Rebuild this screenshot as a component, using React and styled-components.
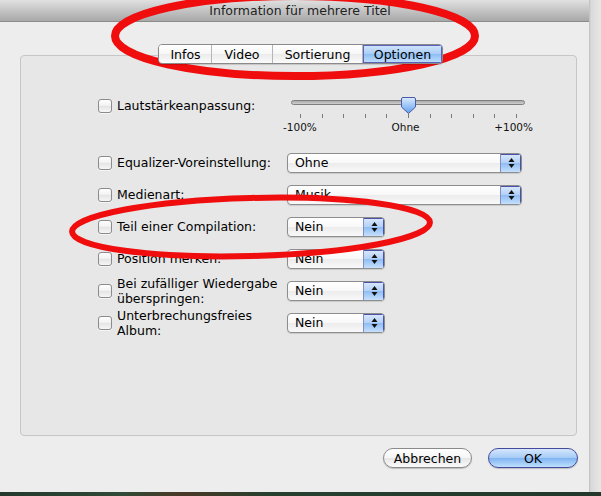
import React from "react";
import styled, { createGlobalStyle } from "styled-components";

const GlobalStyle = createGlobalStyle`
  html, body {
    margin: 0;
    padding: 0;
    background: #e4e4e4;
  }
  body {
    font-family: "DejaVu Sans", "Liberation Sans", sans-serif;
    font-size: 12.5px;
    color: #000;
  }
`;

const Screen = styled.div`
  position: relative;
  width: 601px;
  height: 496px;
  display: flex;
  flex-direction: column;
  overflow: hidden;
`;

const Desk = styled.div`
  display: flex;
  height: 492px;
`;

const Window = styled.div`
  width: 589px;
  height: 492px;
  background: #ededed;
  display: flex;
  flex-direction: column;
`;

const RightEdge = styled.div`
  flex: 1;
  background: linear-gradient(90deg, #bdbdbd 0, #dadada 2px, #e6e6e6 100%);
`;

const BottomStrip = styled.div`
  height: 4px;
  background: linear-gradient(90deg, #24392c 0, #2f4a36 20%, #4a3826 30%, #27402e 45%, #23382b 100%);
`;

const TitleBar = styled.div`
  height: 21px;
  border-bottom: 1px solid #8c8c8c;
  background: linear-gradient(#e0e0e0, #c4c4c4 50%, #a8a8a8);
  display: flex;
  align-items: center;
  justify-content: center;
  padding-left: 11px;
  color: #222;
  font-size: 12.5px;
`;

const TabBar = styled.div`
  position: relative;
  z-index: 1;
  margin: 22px 0 0 158px;
  display: flex;
  align-self: flex-start;
  height: 18px;
  border: 1px solid #8a8a8a;
  border-radius: 4px;
  overflow: hidden;
  box-shadow: 0 1px 1px rgba(0, 0, 0, 0.15);
`;

const Tab = styled.div`
  width: ${(p) => p.$w}px;
  display: flex;
  align-items: center;
  justify-content: center;
  border-left: 1px solid ${(p) => (p.$first ? "transparent" : "#b5b5b5")};
  background: ${(p) =>
    p.$active
      ? "linear-gradient(#d3e5fb, #a9cdf6 50%, #8dbdf4 51%, #c2e0fd)"
      : "linear-gradient(#ffffff, #f6f6f6 50%, #ebebeb 51%, #fbfbfb)"};
  box-shadow: ${(p) => (p.$active ? "inset 0 0 0 1px #5b63b8" : "none")};
`;

const Panel = styled.div`
  margin: -9px 0 0 20px;
  width: 557px;
  height: 381px;
  box-sizing: border-box;
  border: 1px solid #c6c6c6;
  border-radius: 4px;
  background: #e7e7e7;
  padding: 41px 0 0 77px;
  display: flex;
  flex-direction: column;
  gap: 11px;
`;

const Row = styled.div`
  display: grid;
  grid-template-columns: 14px 165px auto;
  grid-template-rows: ${(p) => (p.$slider ? "auto" : "21px")};
  column-gap: 5px;
  align-items: ${(p) => (p.$slider ? "start" : "center")};
  margin-bottom: ${(p) => (p.$slider ? "8px" : "0")};
`;

const Check = styled.div`
  width: 14px;
  height: 14px;
  box-sizing: border-box;
  border: 1px solid #8b8b8b;
  border-radius: 3px;
  background: linear-gradient(#ffffff, #f1f1f1 50%, #e4e4e4 51%, #f7f7f7);
  box-shadow: 0 1px 0 rgba(255, 255, 255, 0.6);
  margin-top: ${(p) => (p.$slider ? "2px" : "0")};
`;

const Label = styled.div`
  line-height: 15px;
  white-space: nowrap;
  margin-top: ${(p) => (p.$slider ? "1px" : "0")};
`;

const Slider = styled.div`
  width: 238px;
  display: flex;
  flex-direction: column;
`;

const TrackArea = styled.div`
  position: relative;
  height: 16px;
  padding: 3px 0 0 4px;
  box-sizing: border-box;
`;

const Track = styled.div`
  width: 234px;
  height: 5px;
  box-sizing: border-box;
  border: 1px solid #7e7e7e;
  border-radius: 3px;
  background: linear-gradient(#a9a9a9, #cfcfcf);
`;

const Thumb = styled.svg`
  position: absolute;
  left: 114px;
  top: 0;
`;

const Ticks = styled.div`
  display: flex;
  justify-content: space-between;
  padding: 0 8px 0 13px;
  margin-top: 1px;
`;

const Tick = styled.div`
  width: 1px;
  height: 4px;
  background: #7a7a7a;
`;

const TickLabels = styled.div`
  display: flex;
  justify-content: space-between;
  margin: 3px -8px 0 -4px;
  font-size: 10.5px;
  line-height: 12px;
  color: #111;
`;

const Popup = styled.div`
  width: ${(p) => p.$w}px;
  height: 20px;
  box-sizing: border-box;
  display: flex;
  border: 1px solid #8d8d8d;
  border-radius: 4px;
  overflow: hidden;
  background: linear-gradient(#ffffff, #f8f8f8 50%, #ececec 51%, #f9f9f9);
  box-shadow: 0 1px 1px rgba(0, 0, 0, 0.12);
`;

const PopupValue = styled.div`
  flex: 1;
  padding-left: 7px;
  line-height: 18px;
`;

const Stepper = styled.div`
  width: 20px;
  display: flex;
  align-items: center;
  justify-content: center;
  border-left: 1px solid #7f8fc4;
  background: linear-gradient(#dbe9fb, #b2d0f6 50%, #8ebcf3 51%, #c5e0fc);
  box-shadow: inset 0 1px 0 #4c51a8, inset -1px 0 0 #4c51a8;
`;

const Footer = styled.div`
  display: flex;
  justify-content: flex-end;
  gap: 16px;
  margin-top: 12px;
  padding-right: 11px;
`;

const Button = styled.div`
  width: ${(p) => p.$w}px;
  height: 20px;
  box-sizing: border-box;
  border-radius: 10px;
  display: flex;
  align-items: center;
  justify-content: center;
  border: 1px solid ${(p) => (p.$primary ? "#464a9c" : "#8a8a8a")};
  background: ${(p) =>
    p.$primary
      ? "linear-gradient(#d4e6fc, #a5cbf6 50%, #7fb3f1 51%, #bfe0fd)"
      : "linear-gradient(#ffffff, #f5f5f5 50%, #e6e6e6 51%, #fafafa)"};
  box-shadow: 0 1px 1px rgba(0, 0, 0, 0.2);
`;

const Marks = styled.svg`
  position: absolute;
  left: 0;
  top: 0;
  pointer-events: none;
`;

const UpDown = () => (
  <svg width="7" height="12" viewBox="0 0 7 12">
    <path d="M3.5 1 L6.5 5 L0.5 5 Z" fill="#111" />
    <path d="M3.5 11 L6.5 7 L0.5 7 Z" fill="#111" />
  </svg>
);

const Select = ({ value, w }) => (
  <Popup $w={w}>
    <PopupValue>{value}</PopupValue>
    <Stepper>
      <UpDown />
    </Stepper>
  </Popup>
);

const tabs = [
  { name: "Infos", w: 51 },
  { name: "Video", w: 60 },
  { name: "Sortierung", w: 89 },
  { name: "Optionen", w: 79, active: true },
];

const rows = [
  { label: "Equalizer-Voreinstellung:", value: "Ohne", w: 235 },
  { label: "Medienart:", value: "Musik", w: 235 },
  { label: "Teil einer Compilation:", value: "Nein", w: 98 },
  { label: "Position merken:", value: "Nein", w: 98 },
  { label: ["Bei zufälliger Wiedergabe", "überspringen:"], value: "Nein", w: 98 },
  { label: ["Unterbrechungsfreies", "Album:"], value: "Nein", w: 98 },
];

export default function App() {
  return (
    <>
      <GlobalStyle />
      <Screen>
        <Desk>
          <Window>
            <TitleBar>Information für mehrere Titel</TitleBar>
            <TabBar>
              {tabs.map((t, i) => (
                <Tab key={t.name} $w={t.w} $active={t.active} $first={i === 0}>
                  {t.name}
                </Tab>
              ))}
            </TabBar>
            <Panel>
              <Row $slider>
                <Check $slider />
                <Label $slider>Lautstärkeanpassung:</Label>
                <Slider>
                  <TrackArea>
                    <Track />
                    <Thumb width="15" height="17" viewBox="0 0 15 17">
                      <defs>
                        <linearGradient id="thumb" x1="0" y1="0" x2="0" y2="1">
                          <stop offset="0" stopColor="#dcebfc" />
                          <stop offset="0.5" stopColor="#9cc6f6" />
                          <stop offset="1" stopColor="#5f9ded" />
                        </linearGradient>
                      </defs>
                      <path
                        d="M2 0.5 H13 Q14.5 0.5 14.5 2 V10 L7.5 16.5 L0.5 10 V2 Q0.5 0.5 2 0.5 Z"
                        fill="url(#thumb)"
                        stroke="#4a5aa8"
                      />
                    </Thumb>
                  </TrackArea>
                  <Ticks>
                    {Array(11)
                      .fill()
                      .map((_, i) => (
                        <Tick key={i} />
                      ))}
                  </Ticks>
                  <TickLabels>
                    <span>-100%</span>
                    <span>Ohne</span>
                    <span>+100%</span>
                  </TickLabels>
                </Slider>
              </Row>
              {rows.map((r, i) => (
                <Row key={i}>
                  <Check />
                  <Label>
                    {Array.isArray(r.label)
                      ? r.label.map((l) => <div key={l}>{l}</div>)
                      : r.label}
                  </Label>
                  <Select value={r.value} w={r.w} />
                </Row>
              ))}
            </Panel>
            <Footer>
              <Button $w={89}>Abbrechen</Button>
              <Button $w={90} $primary>
                OK
              </Button>
            </Footer>
          </Window>
          <RightEdge />
        </Desk>
        <BottomStrip />
        <Marks width="601" height="496" viewBox="0 0 601 496">
          <ellipse cx="295" cy="36" rx="180" ry="40" fill="none" stroke="#f00d0d" strokeWidth="8" />
          <ellipse
            cx="251"
            cy="227"
            rx="179"
            ry="29"
            fill="none"
            stroke="#f00d0d"
            strokeWidth="6"
            transform="rotate(-1.5 251 227)"
          />
        </Marks>
      </Screen>
    </>
  );
}
